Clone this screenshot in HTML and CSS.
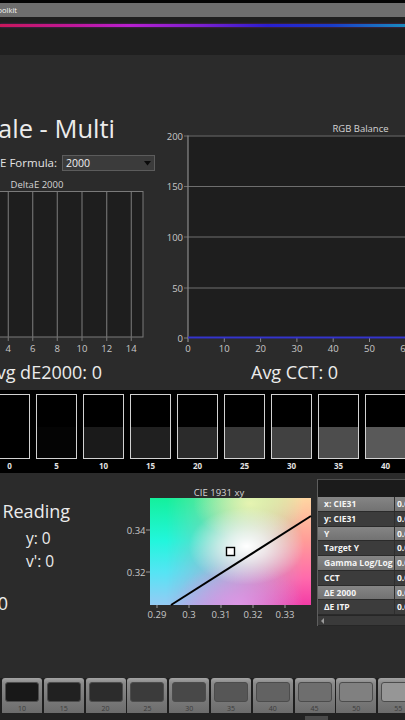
FILE: index.html
```html
<!DOCTYPE html>
<html>
<head>
<meta charset="utf-8">
<link rel="stylesheet" href="styles.css">
</head>
<body>
<div class="app">
  <div class="topline"></div>
  <div class="titlebar"><div class="anchor-r title-anchor"><span>Calibration Toolkit</span></div></div>
  <div class="header"><div class="rainbow"></div></div>

  <div class="main">
    <div class="leftcol">
      <div class="anchor-r h1-anchor"><h1 class="pagetitle">Grayscale - Multi</h1></div>
      <div class="formula">
        <div class="anchor-r f-anchor"><span>DeltaE Formula:</span></div>
        <div class="select"><span>2000</span><svg class="caret" width="7" height="5" viewBox="0 0 7 5"><polygon points="0,0 7,0 3.5,4.5" fill="#0a0a0a"/></svg></div>
      </div>
      <svg class="de-chart" width="160" height="178" viewBox="0 0 160 178">
        <text x="37" y="10" class="ctitle" text-anchor="middle">DeltaE 2000</text>
        <rect x="-45" y="13.5" width="188" height="145.5" fill="#1e1e1e" stroke="#7a7a7a" stroke-width="1"/>
        <g stroke="#6e6e6e" stroke-width="1.2">
          <line x1="8.3" y1="14" x2="8.3" y2="163"/>
          <line x1="32.7" y1="14" x2="32.7" y2="163"/>
          <line x1="57.3" y1="14" x2="57.3" y2="163"/>
          <line x1="82" y1="14" x2="82" y2="163"/>
          <line x1="106.7" y1="14" x2="106.7" y2="163"/>
          <line x1="131.3" y1="14" x2="131.3" y2="163"/>
        </g>
        <g class="tick" text-anchor="middle">
          <text x="8.3" y="174">4</text>
          <text x="32.7" y="174">6</text>
          <text x="57.3" y="174">8</text>
          <text x="82" y="174">10</text>
          <text x="106.7" y="174">12</text>
          <text x="131.3" y="174">14</text>
        </g>
      </svg>
      <div class="anchor-r avg-anchor"><span class="avg">Avg dE2000: 0</span></div>
    </div>

    <div class="rightcol">
      <svg class="rgb-chart" width="245" height="236" viewBox="0 0 245 236">
        <text x="200.5" y="12" class="ctitle" text-anchor="middle">RGB Balance</text>
        <rect x="28" y="15.5" width="240" height="203" fill="#1e1e1e"/>
        <g stroke="#6e6e6e" stroke-width="1.2">
          <line x1="24" y1="16" x2="245" y2="16"/>
          <line x1="24" y1="66.5" x2="245" y2="66.5"/>
          <line x1="24" y1="117" x2="245" y2="117"/>
          <line x1="24" y1="168" x2="245" y2="168"/>
          <line x1="24" y1="218" x2="28" y2="218"/>
        </g>
        <line x1="28" y1="15.5" x2="28" y2="222" stroke="#8a8a8a" stroke-width="1.2"/>
        <g stroke="#8a8a8a" stroke-width="1">
          <line x1="64.3" y1="218" x2="64.3" y2="222"/>
          <line x1="100.6" y1="218" x2="100.6" y2="222"/>
          <line x1="136.9" y1="218" x2="136.9" y2="222"/>
          <line x1="173.2" y1="218" x2="173.2" y2="222"/>
          <line x1="209.5" y1="218" x2="209.5" y2="222"/>
        </g>
        <line x1="28" y1="217.5" x2="245" y2="217.5" stroke="#3434cc" stroke-width="2"/>
        <g class="tick" text-anchor="end">
          <text x="23" y="19.5">200</text>
          <text x="23" y="70">150</text>
          <text x="23" y="120.5">100</text>
          <text x="23" y="171.5">50</text>
          <text x="23" y="221.5">0</text>
        </g>
        <g class="tick" text-anchor="middle">
          <text x="28" y="232">0</text>
          <text x="64.3" y="232">10</text>
          <text x="100.6" y="232">20</text>
          <text x="136.9" y="232">30</text>
          <text x="173.2" y="232">40</text>
          <text x="209.5" y="232">50</text>
          <text x="245.8" y="232">60</text>
        </g>
      </svg>
      <div class="avg cct">Avg CCT: 0</div>
    </div>
  </div>

  <div class="swatches">
    <div class="sw"><div class="box"><div class="fill" style="--g:#000000"></div></div><div class="lbl">0</div></div>
    <div class="sw"><div class="box"><div class="fill" style="--g:#040404"></div></div><div class="lbl">5</div></div>
    <div class="sw"><div class="box"><div class="fill" style="--g:#1a1a1a"></div></div><div class="lbl">10</div></div>
    <div class="sw"><div class="box"><div class="fill" style="--g:#202020"></div></div><div class="lbl">15</div></div>
    <div class="sw"><div class="box"><div class="fill" style="--g:#2b2b2b"></div></div><div class="lbl">20</div></div>
    <div class="sw"><div class="box"><div class="fill" style="--g:#393939"></div></div><div class="lbl">25</div></div>
    <div class="sw"><div class="box"><div class="fill" style="--g:#414141"></div></div><div class="lbl">30</div></div>
    <div class="sw"><div class="box"><div class="fill" style="--g:#4d4d4d"></div></div><div class="lbl">35</div></div>
    <div class="sw"><div class="box"><div class="fill" style="--g:#595959"></div></div><div class="lbl">40</div></div>
  </div>

  <div class="lower">
    <div class="reading">
      <div class="anchor-r rd-anchor"><span class="rd-title">Current Reading</span></div>
      <div class="coords"><span>x: 0</span><span>y: 0</span><span>u': 0</span><span>v': 0</span></div>
      <div class="anchor-r lum-anchor"><span class="lum">Y: 0</span></div>
    </div>

    <svg class="cie" width="198" height="138" viewBox="0 0 198 138">
      <defs>
        <linearGradient id="gl" x1="0" y1="0" x2="0" y2="1">
          <stop offset="0" stop-color="#14f09c"/>
          <stop offset="0.4" stop-color="#22f6dc"/>
          <stop offset="0.7" stop-color="#56e4f4"/>
          <stop offset="1" stop-color="#94cbf4"/>
        </linearGradient>
        <linearGradient id="gr" x1="0" y1="0" x2="0" y2="1">
          <stop offset="0" stop-color="#ffd6a2"/>
          <stop offset="0.4" stop-color="#ff9c98"/>
          <stop offset="0.75" stop-color="#ff6aac"/>
          <stop offset="1" stop-color="#f23ca6"/>
        </linearGradient>
        <linearGradient id="gh" x1="0" y1="0" x2="1" y2="0">
          <stop offset="0.1" stop-color="#fff" stop-opacity="0"/>
          <stop offset="0.95" stop-color="#fff" stop-opacity="1"/>
        </linearGradient>
        <mask id="mh"><rect x="32" y="14" width="161" height="107" fill="url(#gh)"/></mask>
        <radialGradient id="gw" cx="0.6" cy="0.45" r="0.36">
          <stop offset="0" stop-color="#ffffff" stop-opacity="1"/>
          <stop offset="0.35" stop-color="#ffffff" stop-opacity="0.7"/>
          <stop offset="1" stop-color="#ffffff" stop-opacity="0"/>
        </radialGradient>
        <radialGradient id="gy" cx="0.62" cy="0.05" r="0.35">
          <stop offset="0" stop-color="#f2f8b4" stop-opacity="0.85"/>
          <stop offset="1" stop-color="#f2f8b4" stop-opacity="0"/>
        </radialGradient>
        <radialGradient id="gp" cx="0.55" cy="1" r="0.4">
          <stop offset="0" stop-color="#e6a0f0" stop-opacity="0.7"/>
          <stop offset="1" stop-color="#e6a0f0" stop-opacity="0"/>
        </radialGradient>
      </defs>
      <text x="101" y="12" class="ctitle" text-anchor="middle">CIE 1931 xy</text>
      <rect x="32" y="14" width="161" height="107" fill="url(#gl)"/>
      <rect x="32" y="14" width="161" height="107" fill="url(#gr)" mask="url(#mh)"/>
      <rect x="32" y="14" width="161" height="107" fill="url(#gy)"/>
      <rect x="32" y="14" width="161" height="107" fill="url(#gp)"/>
      <rect x="32" y="14" width="161" height="107" fill="url(#gw)"/>
      <line x1="53" y1="121" x2="193" y2="32" stroke="#000" stroke-width="2"/>
      <rect x="108.5" y="63.5" width="8" height="8" fill="#fff" stroke="#000" stroke-width="1.4"/>
      <g stroke="#9a9a9a" stroke-width="1">
        <line x1="28" y1="46" x2="32" y2="46"/>
        <line x1="28" y1="88" x2="32" y2="88"/>
        <line x1="39" y1="121" x2="39" y2="124"/>
        <line x1="71" y1="121" x2="71" y2="124"/>
        <line x1="103" y1="121" x2="103" y2="124"/>
        <line x1="135" y1="121" x2="135" y2="124"/>
        <line x1="167" y1="121" x2="167" y2="124"/>
      </g>
      <g class="tick" text-anchor="end">
        <text x="27.5" y="49.5">0.34</text>
        <text x="27.5" y="91.5">0.32</text>
      </g>
      <g class="tick" text-anchor="middle">
        <text x="39" y="134">0.29</text>
        <text x="71" y="134">0.3</text>
        <text x="103" y="134">0.31</text>
        <text x="135" y="134">0.32</text>
        <text x="167" y="134">0.33</text>
      </g>
    </svg>

    <div class="table">
      <div class="thead"></div>
      <div class="trow light"><div class="tl">x: CIE31</div><div class="tv">0.0000</div></div>
      <div class="trow dark"><div class="tl">y: CIE31</div><div class="tv">0.0000</div></div>
      <div class="trow light"><div class="tl">Y</div><div class="tv">0.0000</div></div>
      <div class="trow dark"><div class="tl">Target Y</div><div class="tv">0.0000</div></div>
      <div class="trow light"><div class="tl">Gamma Log/Log</div><div class="tv">0.0000</div></div>
      <div class="trow dark"><div class="tl">CCT</div><div class="tv">0.0000</div></div>
      <div class="trow light"><div class="tl">ΔE 2000</div><div class="tv">0.0000</div></div>
      <div class="trow dark"><div class="tl">ΔE ITP</div><div class="tv">0.0000</div></div>
      <div class="tscroll"><span class="sarrow"></span></div>
    </div>
  </div>

  <div class="bottombar">
    <div class="buttons">
      <div class="btn"><div class="sq" style="--g:#181818"></div><div class="n">10</div></div>
      <div class="btn"><div class="sq" style="--g:#212121"></div><div class="n">15</div></div>
      <div class="btn"><div class="sq" style="--g:#2c2c2c"></div><div class="n">20</div></div>
      <div class="btn"><div class="sq" style="--g:#3b3b3b"></div><div class="n">25</div></div>
      <div class="btn"><div class="sq" style="--g:#484848"></div><div class="n">30</div></div>
      <div class="btn"><div class="sq" style="--g:#565656"></div><div class="n">35</div></div>
      <div class="btn"><div class="sq" style="--g:#626262"></div><div class="n">40</div></div>
      <div class="btn"><div class="sq" style="--g:#6e6e6e"></div><div class="n">45</div></div>
      <div class="btn"><div class="sq" style="--g:#808080"></div><div class="n">50</div></div>
      <div class="btn"><div class="sq" style="--g:#969696"></div><div class="n">55</div></div>
    </div>
    <div class="track"><div class="thumb"></div></div>
  </div>
</div>
</body>
</html>
```

FILE: styles.css
```css
* { box-sizing: border-box; margin: 0; padding: 0; }

html, body {
  width: 405px;
  height: 720px;
  overflow: hidden;
  background: #2b2b2b;
}

body {
  font-family: "Open Sans", "DejaVu Sans", sans-serif;
  color: #e8e8e8;
}

.app {
  width: 405px;
  height: 720px;
  overflow: hidden;
  display: flex;
  flex-direction: column;
}

.anchor-r {
  display: flex;
  justify-content: flex-end;
  white-space: nowrap;
}
.anchor-r > * { flex: none; }

.topline { flex: none; height: 3px; background: #050505; }

.titlebar { flex: none; height: 14px; background: #6e6e6e; }
.title-anchor {
  width: 17px;
  font-size: 7.5px;
  line-height: 14px;
  color: #f6f6f6;
}

.header {
  flex: none;
  height: 38px;
  background: #1f1f1f;
  padding-top: 7px;
}
.rainbow {
  height: 3px;
  background: linear-gradient(to right, #c8185a 0%, #c0189a 18%, #b820d0 32%, #7a20d0 50%, #2a1ed0 66%, #1a3cc8 82%, #1a8cc0 100%);
  box-shadow: 0 0 2px rgba(170, 40, 200, 0.6);
}

/* main charts area */
.main {
  flex: none;
  height: 335px;
  display: grid;
  grid-template-columns: 160px 245px;
  align-items: start;
}

.leftcol { padding-top: 58px; }

.h1-anchor { width: 115px; }
.pagetitle {
  font-size: 25.5px;
  font-weight: 400;
  line-height: 30px;
  color: #ececec;
}

.formula {
  margin-top: 12px;
  height: 16px;
  display: flex;
  align-items: center;
  gap: 5px;
}
.f-anchor {
  width: 57px;
  font-size: 11.5px;
  line-height: 16px;
  color: #e4e4e4;
}
.select {
  width: 93px;
  height: 16px;
  background: #3b3b3b;
  border: 1px solid #5c5c5c;
  display: flex;
  align-items: center;
  justify-content: space-between;
  padding: 0 3px 0 3px;
  font-size: 10.5px;
  line-height: 14px;
  color: #f0f0f0;
}
.caret { display: block; }

.de-chart, .rgb-chart, .cie { display: block; flex: none; }
.de-chart { margin-top: 7px; }

.ctitle {
  font-family: "Open Sans", "DejaVu Sans", sans-serif;
  font-size: 9.5px;
  fill: #d4d4d4;
}
.tick {
  font-family: "Open Sans", "DejaVu Sans", sans-serif;
  font-size: 9.5px;
  fill: #c8c8c8;
}

.avg-anchor { width: 102px; margin-top: 4px; }
.avg {
  font-size: 18px;
  line-height: 24px;
  color: #ececec;
}

.rightcol { padding-top: 65px; }
.cct { margin-top: 4px; padding-left: 91px; }

/* swatch strip */
.swatches {
  flex: none;
  height: 83px;
  margin-left: -11px;
  background: #000;
  display: flex;
  gap: 6px;
  padding-top: 4px;
}
.sw { flex: none; width: 41px; }
.box {
  height: 65px;
  border: 1px solid #d2d2d2;
  background: #000;
  display: flex;
  flex-direction: column;
  justify-content: flex-end;
}
.fill { height: 31px; background: var(--g); }
.lbl {
  margin-top: 2px;
  font-size: 8px;
  font-weight: 700;
  line-height: 10px;
  text-align: center;
  color: #e2e2e2;
}

/* lower area */
.lower {
  flex: none;
  height: 205px;
  display: flex;
  align-items: flex-start;
}

.reading { flex: none; width: 118px; padding-top: 26px; }
.rd-anchor { width: 70px; }
.rd-title { font-size: 18px; line-height: 24px; color: #ececec; }

.coords {
  margin-top: 5px;
  margin-left: -40px;
  display: grid;
  grid-template-columns: 66px auto;
  row-gap: 3px;
  font-size: 15.5px;
  line-height: 20px;
  color: #ececec;
  white-space: nowrap;
}

.lum-anchor { width: 8px; margin-top: 20px; }
.lum { font-size: 18px; line-height: 24px; color: #ececec; }

.cie { margin-top: 11px; }

.table {
  flex: none;
  width: 100px;
  height: 147px;
  margin-top: 6px;
  margin-left: 1px;
  background: #262626;
  border-left: 1px solid #5e5e5e;
  border-top: 1px solid #4e4e4e;
}
.thead { height: 17px; background: #1b1b1b; }
.trow {
  display: flex;
  height: 14.75px;
  border-bottom: 1px solid #2a2a2a;
  font-size: 8.5px;
  font-weight: 700;
  line-height: 13.75px;
  color: #f4f4f4;
  white-space: nowrap;
}
.trow.light { background: linear-gradient(#858585, #727272); }
.trow.dark { background: #3c3c3c; }
.tl {
  flex: none;
  width: 77px;
  padding-left: 6px;
  border-right: 1px solid #2e2e2e;
}
.tv { padding-left: 2px; }

.tscroll {
  height: 9px;
  margin-top: 1px;
  background: #3a3a3a;
  display: flex;
  align-items: center;
  padding-left: 3px;
}
.sarrow {
  width: 0;
  height: 0;
  border-top: 3px solid transparent;
  border-bottom: 3px solid transparent;
  border-right: 3px solid #9a9a9a;
}

/* bottom buttons */
.bottombar {
  flex: none;
  height: 42px;
  background: #1e1e1e;
}
.buttons {
  height: 35px;
  display: flex;
  gap: 1.8px;
  padding-left: 2px;
}
.btn {
  flex: none;
  width: 40px;
  height: 35px;
  border-radius: 3px 3px 0 0;
  background: linear-gradient(#a4a4a4, #8a8a8a 14%, #7a7a7a 60%, #6c6c6c);
  padding: 4px 3px 0 3px;
}
.sq {
  height: 20px;
  border-radius: 3px;
  border: 1px solid #4c4c4c;
  background: var(--g);
}
.n {
  margin-top: 2px;
  font-size: 7px;
  line-height: 9px;
  text-align: center;
  color: #3c3c3c;
}
.track {
  height: 7px;
  background: #222;
  padding-top: 3px;
}
.thumb {
  width: 23px;
  height: 4px;
  margin-left: 305px;
  background: #4a4a4a;
}
```
